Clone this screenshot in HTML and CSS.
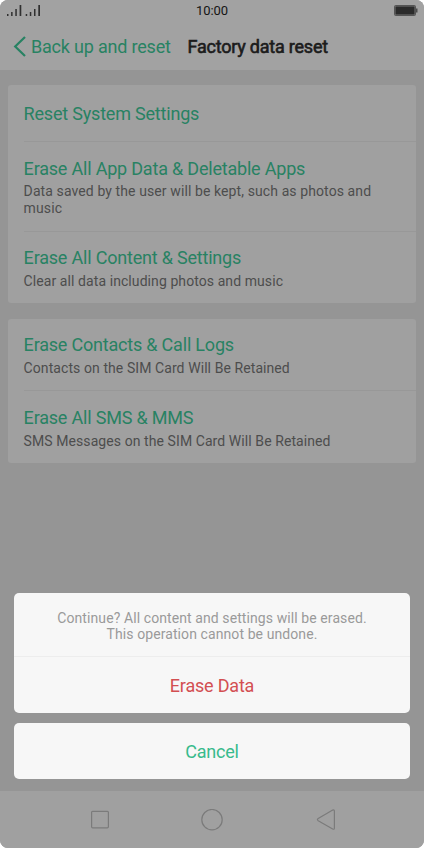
FILE: index.html
```html
<!DOCTYPE html>
<html lang="en">
<head>
<meta charset="utf-8">
<title>Factory data reset</title>
<link rel="stylesheet" href="styles.css">
</head>
<body>
<div class="phone">
  <header class="top">
    <div class="status">
      <svg class="signal" width="35" height="13" viewBox="0 0 35 13" fill="#303030">
        <path d="M0 10h1.500v2H0zM4.100 8h1.500v4H4.100zM8.300 5h1.500v7H8.300zM12.600 1h1.700v11h-1.700zM18.700 10h1.500v2h-1.500zM22.800 8h1.500v4h-1.500zM27 5h1.500v7H27zM31.300 1H33v11h-1.700z"/>
      </svg>
      <span class="time">10:00</span>
      <svg class="battery" width="24" height="11" viewBox="0 0 24 11">
        <rect x=".5" y=".5" width="21" height="10" rx="1" fill="#777" stroke="#555"/>
        <rect x="1.500" y="1.500" width="19" height="8" fill="#2b2b2b"/>
        <path d="M22 3.500h1.500v4H22z" fill="#4c4c4c"/>
      </svg>
    </div>
    <nav class="bar">
      <svg class="back-icon" width="13" height="21" viewBox="0 0 13 21" fill="none" stroke="#288263" stroke-width="2.200">
        <path d="M12 1L2.200 10.500 12 20"/>
      </svg>
      <span class="back">Back up and reset</span>
      <h1>Factory data reset</h1>
    </nav>
  </header>
  <main>
    <section class="card">
      <div class="row single"><h2>Reset System Settings</h2></div>
      <div class="row tall"><h2>Erase All App Data &amp; Deletable Apps</h2><p>Data saved by the user will be kept, such as photos and<br>music</p></div>
      <div class="row"><h2>Erase All Content &amp; Settings</h2><p>Clear all data including photos and music</p></div>
    </section>
    <section class="card">
      <div class="row short"><h2>Erase Contacts &amp; Call Logs</h2><p>Contacts on the SIM Card Will Be Retained</p></div>
      <div class="row last"><h2>Erase All SMS &amp; MMS</h2><p>SMS Messages on the SIM Card Will Be Retained</p></div>
    </section>
  </main>
  <div class="sheet">
    <div class="dialog">
      <p class="message">Continue? All content and settings will be erased.<br>This operation cannot be undone.</p>
      <div class="action erase">Erase Data</div>
    </div>
    <div class="dialog action cancel">Cancel</div>
  </div>
  <footer class="keys">
    <svg width="20" height="22" viewBox="0 0 20 22"><rect x="1.600" y="2.300" width="16.800" height="16.500" rx="1"/></svg>
    <svg width="22" height="22" viewBox="0 0 22 22"><circle cx="11" cy="10.700" r="10.200"/></svg>
    <svg width="20" height="22" viewBox="0 0 20 22"><path d="M16.700 1.100L2.200 9.500q-1.600 1.100 0 2.200l14.500 8.300q1.700.8 1.700-1V2.100q0-1.800-1.700-1z"/></svg>
  </footer>
</div>
</body>
</html>
```
FILE: styles.css
```css
* { box-sizing: border-box; }
body { margin: 0; background: #fff; font-family: Roboto, sans-serif; }
h1, h2, p { margin: 0; font-weight: 400; white-space: nowrap; }
.phone { width: 424px; height: 848px; display: flex; flex-direction: column; background: #959595; border-radius: 8px; overflow: hidden; }
.top { height: 70px; background: #a2a2a2; }
.status { height: 22px; padding: 0 7px; display: grid; grid-template-columns: 1fr auto 1fr; align-items: center; }
.signal { margin-top: -1px; }
.time { font-size: 13px; letter-spacing: -0.100px; color: #151515; line-height: 22px; }
.battery { justify-self: end; margin: -1px -1px 0 0; }
.bar { height: 48px; display: flex; align-items: center; padding-left: 13px; }
.back-icon { flex: none; }
.back { width: 140px; margin-left: 5px; margin-top: 2px; font-size: 18px; letter-spacing: -0.200px; line-height: 22px; color: #288263; white-space: nowrap; }
h1 { margin-left: 16.500px; margin-top: 1px; font-size: 18px; letter-spacing: -0.220px; line-height: 22px; color: #1c1c1c; -webkit-text-stroke: 0.600px #1c1c1c; }
main { padding: 15px 8px 0; display: flex; flex-direction: column; gap: 16px; }
.card { background: #a0a0a0; border-radius: 3px; padding-left: 16px; }
.row { height: 72px; padding-top: 15px; }
.row + .row { border-top: 1px solid #989898; }
.card .single { height: 56px; padding-top: 18px; }
.card .tall { height: 90px; padding-top: 16px; }
.card .short { height: 71px; }
.card .last { height: 73px; padding-top: 16px; }
.card h2 { margin-left: -0.400px; font-size: 18px; letter-spacing: -0.200px; line-height: 21px; color: #288263; }
.card p { margin-top: 5px; margin-left: -0.400px; font-size: 14px; letter-spacing: 0.080px; line-height: 17px; color: #4d4d4d; }
.card .tall p { margin-top: 4px; letter-spacing: 0.100px; }
.sheet { margin-top: auto; padding: 0 14px 12px; display: flex; flex-direction: column; gap: 10px; }
.dialog { background: #f7f7f7; border-radius: 5px; text-align: center; }
.message { height: 64px; padding-top: 17px; border-bottom: 1px solid #ededed; font-size: 14px; letter-spacing: 0.090px; line-height: 16px; color: #9a9a9a; }
.action { height: 56px; font-size: 18px; letter-spacing: -0.200px; line-height: 57px; }
.erase { color: #d34f52; }
.cancel { color: #38bb8c; }
.keys { height: 57px; background: #a0a0a0; display: flex; justify-content: space-between; align-items: center; padding: 0 88px 0 90px; }
.keys svg { fill: none; stroke: #7b7b7b; stroke-width: 1.200; }
.keys svg:nth-child(2) { margin-left: -2px; }
```
